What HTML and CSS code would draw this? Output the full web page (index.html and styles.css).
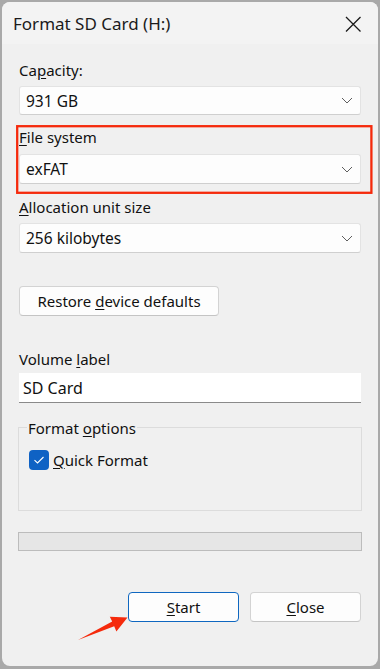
FILE: index.html
```html
<!DOCTYPE html>
<html>
<head>
<meta charset="utf-8">
<link rel="stylesheet" href="styles.css">
</head>
<body>
<div class="window">
  <div class="titlebar">
    <span class="title">Format SD Card (H:)</span>
    <svg class="close" width="18" height="18" viewBox="0 0 18 18"><path d="M2 2L16.5 16.5M16.5 2L2 16.5" stroke="#1a1a1a" stroke-width="1.3" fill="none"/></svg>
  </div>
  <div class="content">
    <div class="label lbl-cap">Ca<u>p</u>acity:</div>
    <div class="select sel-cap"><span>931 GB</span><svg class="chev" width="12" height="7" viewBox="0 0 12 7"><path d="M1 1L6 6L11 1" stroke="#5f5f5f" stroke-width="1" fill="none"/></svg></div>

    <div class="label lbl-fs"><u>F</u>ile system</div>
    <div class="select sel-fs"><span>exFAT</span><svg class="chev" width="12" height="7" viewBox="0 0 12 7"><path d="M1 1L6 6L11 1" stroke="#5f5f5f" stroke-width="1" fill="none"/></svg></div>

    <div class="label lbl-alloc"><u>A</u>llocation unit size</div>
    <div class="select sel-alloc"><span>256 kilobytes</span><svg class="chev" width="12" height="7" viewBox="0 0 12 7"><path d="M1 1L6 6L11 1" stroke="#5f5f5f" stroke-width="1" fill="none"/></svg></div>

    <div class="btn restore"><span>Restore <u>d</u>evice defaults</span></div>

    <div class="label lbl-vol">Volume <u>l</u>abel</div>
    <div class="textbox">SD Card</div>

    <div class="group">
      <div class="legend">Format <u>o</u>ptions</div>
      <div class="check-row">
        <span class="checkbox"><svg width="12" height="10" viewBox="0 0 12 10"><path d="M1.5 5.2L4.5 8L10.5 2" stroke="#fff" stroke-width="1.1" fill="none"/></svg></span>
        <span class="check-label"><u>Q</u>uick Format</span>
      </div>
    </div>

    <div class="progress"></div>

    <div class="actions">
      <div class="btn start"><span><u>S</u>tart</span></div>
      <div class="btn closebtn"><span><u>C</u>lose</span></div>
    </div>
  </div>
</div>
<svg class="annot" width="380" height="669" viewBox="0 0 380 669">
  <rect x="17.2" y="126.2" width="354.2" height="66.6" fill="none" stroke="#f52a0c" stroke-width="2.3"/>
  <polygon points="78,640 114.2,626.2 116.4,631.5 127.5,617.5 109.8,616.8 112.2,621.6" fill="#f52a0c"/>
</svg>
</body>
</html>
```

FILE: styles.css
```css
* { box-sizing: border-box; }
html, body { margin: 0; padding: 0; }
body {
  width: 380px;
  height: 669px;
  background: #a9a9a9;
  font-family: "Noto Sans", "Open Sans", sans-serif;
  color: #111;
  position: relative;
  overflow: hidden;
}
u { text-decoration-thickness: 1px; text-underline-offset: 2px; }
.window {
  position: absolute;
  left: 2px;
  top: 2px;
  width: 376px;
  height: 664px;
  background: #f0f0f0;
  border-radius: 8px;
  overflow: hidden;
  display: flex;
  flex-direction: column;
}
.titlebar {
  height: 42px;
  background: #f3f3f3;
  display: flex;
  align-items: center;
  justify-content: space-between;
  padding: 0 16px 0 11px;
  flex: none;
}
.title { font-size: 17px; color: #1b1b1b; }
.close { display: block; margin-top: 1px; }
.content {
  padding: 16px 17px 0 17px;
  display: flex;
  flex-direction: column;
  align-items: stretch;
}
.label {
  font-size: 15px;
  line-height: 20px;
  height: 20px;
  color: #111;
}
.select {
  background: #fdfdfd;
  border: 1px solid #e3e3e3;
  border-bottom-color: #cfcfcf;
  border-radius: 3px;
  display: flex;
  align-items: center;
  justify-content: space-between;
  padding: 0 7px 0 6px;
  font-size: 15.5px;
  color: #111;
}
.chev { display: block; }
.sel-cap { margin-top: 6px; height: 29px; }
.lbl-fs { margin-top: 12px; }
.sel-fs { margin-top: 7px; height: 30px; }
.lbl-alloc { margin-top: 13px; }
.sel-alloc { margin-top: 6px; height: 30px; }
.btn {
  background: #fdfdfd;
  border: 1px solid #d3d3d3;
  border-bottom-color: #c4c4c4;
  border-radius: 4px;
  display: flex;
  align-items: center;
  justify-content: center;
  font-size: 15px;
  color: #111;
}
.restore { margin-top: 33px; width: 200px; height: 30px; }
.lbl-vol { margin-top: 33px; }
.textbox {
  margin-top: 4px;
  height: 30px;
  background: #fff;
  border-bottom: 1px solid #8a8a8a;
  display: flex;
  align-items: center;
  padding-left: 4px;
  font-size: 16px;
  color: #111;
}
.group {
  margin-top: 24px;
  margin-left: -1px;
  margin-right: -1px;
  height: 84px;
  border: 1px solid #dcdcdc;
  position: relative;
  padding: 22px 0 0 10px;
}
.legend {
  position: absolute;
  left: 8px;
  top: -10px;
  padding: 0 1px;
  background: #f0f0f0;
  font-size: 15px;
  line-height: 20px;
}
.check-row { display: flex; align-items: center; gap: 4px; }
.checkbox {
  width: 20px;
  height: 20px;
  border-radius: 4px;
  background: #0f62c4;
  display: flex;
  align-items: center;
  justify-content: center;
}
.check-label { font-size: 15px; line-height: 20px; }
.progress {
  margin-top: 21px;
  margin-left: -1px;
  margin-right: -1px;
  height: 19px;
  background: #e6e6e6;
  border: 1px solid #bcbcbc;
}
.actions {
  margin-top: 41px;
  display: flex;
  justify-content: flex-end;
  gap: 11px;
}
.actions .btn { width: 111px; height: 30px; font-size: 15px; }
.start { border-color: #0f67c0; border-bottom-color: #0f67c0; }
.annot { position: absolute; left: 0; top: 0; pointer-events: none; }
```
